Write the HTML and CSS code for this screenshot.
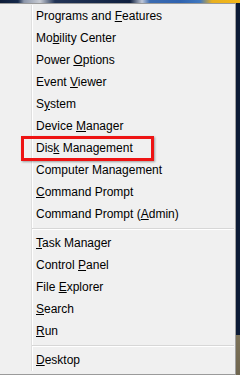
FILE: index.html
```html
<!DOCTYPE html>
<html>
<head>
<meta charset="utf-8">
<link rel="stylesheet" href="styles.css">
</head>
<body>
<div class="desk">
  <div class="topstrip"></div>
  <div class="menu">
    <div class="list">
      <div class="item">Programs and <u>F</u>eatures</div>
      <div class="item">Mo<u>b</u>ility Center</div>
      <div class="item">Power <u>O</u>ptions</div>
      <div class="item">Event <u>V</u>iewer</div>
      <div class="item">S<u>y</u>stem</div>
      <div class="item">Device <u>M</u>anager</div>
      <div class="item hl">Dis<u>k</u> Management<span class="mark"></span></div>
      <div class="item">Computer Mana<u>g</u>ement</div>
      <div class="item"><u>C</u>ommand Prompt</div>
      <div class="item">Command Prompt (<u>A</u>dmin)</div>
      <div class="sep"></div>
      <div class="item"><u>T</u>ask Manager</div>
      <div class="item">Control <u>P</u>anel</div>
      <div class="item">File <u>E</u>xplorer</div>
      <div class="item"><u>S</u>earch</div>
      <div class="item"><u>R</u>un</div>
      <div class="sep"></div>
      <div class="item"><u>D</u>esktop</div>
    </div>
  </div>
</div>
</body>
</html>
```
FILE: styles.css
```css
html, body {
  margin: 0;
  padding: 0;
}
body {
  width: 240px;
  height: 375px;
  overflow: hidden;
  background:
    linear-gradient(180deg, #0c1b36 0, #0c1b36 335px, #7d7359 335px, #6f6650 375px);
  font-family: "Liberation Sans", Arial, sans-serif;
}
.desk {
  display: flex;
  flex-direction: column;
  width: 240px;
  height: 375px;
}
.topstrip {
  height: 3px;
  flex: none;
  background: linear-gradient(90deg, #0e1c38 0, #14284a 18px, #8c96aa 24px, #c8ccd4 40px, #223456 55px, #0f2040 130px, #c0c8d8 142px, #3a6ab0 150px, #2f63b0 180px, #3f78c0 200px, #e8b020 212px, #f5b818 240px);
}
.menu {
  width: 236px;
  flex: 1;
  background: #f0f0f0;
  border-top: 1px solid #9a9a9a;
  border-right: 1px solid #a0a0a0;
  border-bottom: 1px solid #9a9a9a;
  padding: 1px 0 2px 0;
  box-sizing: border-box;
  height: 372px;
  flex: none;
}
.list {
  position: relative;
  display: flex;
  flex-direction: column;
}
.list::before {
  content: "";
  position: absolute;
  left: 31px;
  top: 0;
  bottom: 0;
  width: 1px;
  background: #dfdfdf;
  box-shadow: 1px 0 0 #ffffff;
}
.item {
  position: relative;
  height: 22px;
  line-height: 22px;
  padding-left: 36px;
  font-size: 12px;
  color: #000;
  white-space: nowrap;
}
.item u {
  text-decoration: underline;
  text-underline-offset: 1px;
}
.sep {
  height: 7px;
  position: relative;
}
.sep::after {
  content: "";
  position: absolute;
  left: 32px;
  right: 1px;
  top: 3px;
  height: 1px;
  background: #d7d7d7;
  box-shadow: 0 1px 0 #ffffff;
}
.mark {
  position: absolute;
  left: 21px;
  top: -1px;
  width: 133px;
  height: 25px;
  box-sizing: border-box;
  border: 3px solid #ee1414;
  box-shadow: 1px 1px 2px rgba(0, 0, 0, 0.35);
}
```
